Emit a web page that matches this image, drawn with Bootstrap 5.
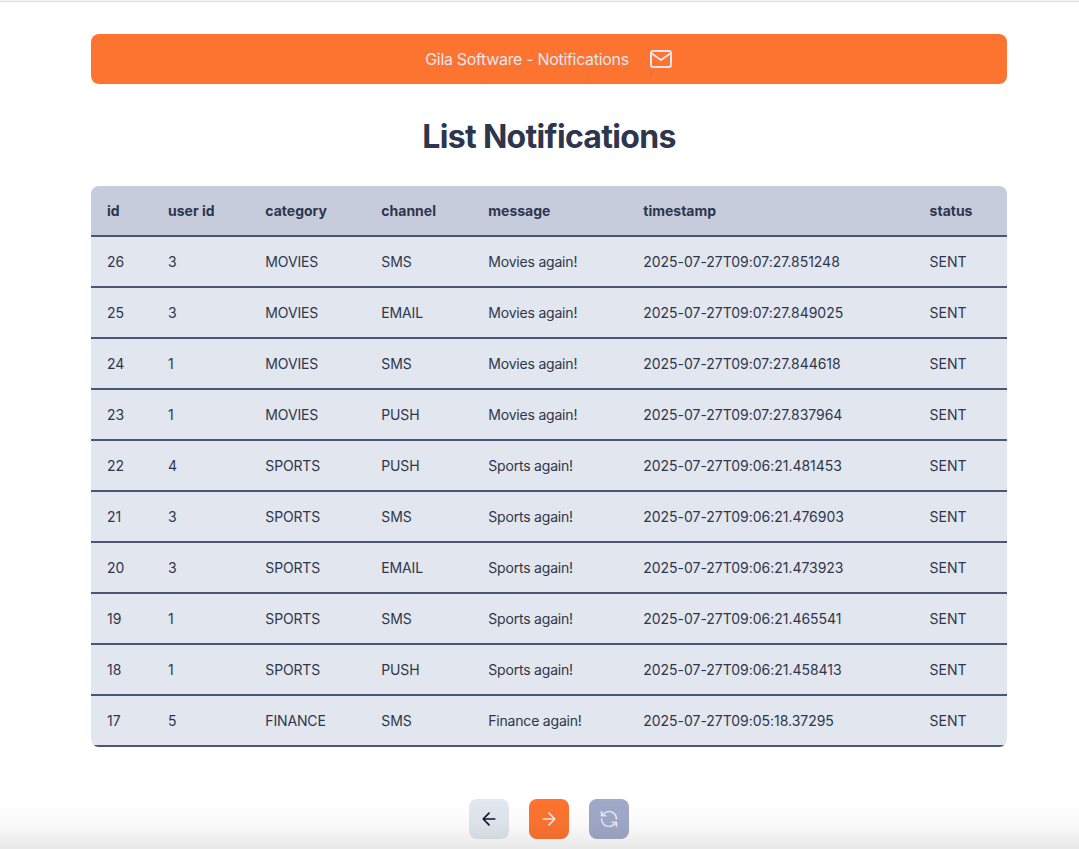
<!DOCTYPE html>
<html lang="en">
<head>
<meta charset="utf-8">
<meta name="viewport" content="width=device-width, initial-scale=1">
<title>Gila Software - Notifications</title>
<link rel="stylesheet" href="https://cdn.jsdelivr.net/npm/bootstrap@5.3.0/dist/css/bootstrap.min.css">
<style>
  body { font-family: Inter, sans-serif; color: #2e364d; background: #fff; height: 849px; overflow: hidden; border-top: 1px solid #f2f2f2; }
  .top-rule { height: 1px; background: #dcdcdc; }
  .page { width: 916px; margin-left: 91px; padding-top: 32px; }
  .banner { height: 50px; background: #fd7431; color: #e2e6ee; border-radius: 8px; gap: 20px; font-size: 16px; letter-spacing: -.32px; }
  .page-title { font-size: 32px; font-weight: 700; line-height: 40px; margin: 33px 0 29px; letter-spacing: -.68px; }
  .log-wrap { border-radius: 8px; overflow: hidden; }
  .log { table-layout: fixed; border-collapse: separate; border-spacing: 0; font-size: 14px; line-height: 17px; }
  .log > :not(caption) > * > * { padding: 16px; height: 51px; border-bottom: 2px solid #4c5575; white-space: nowrap; color: #2e364d; background-color: #e2e6ee; }
  .log > thead > tr > th { background-color: #c7ccdd; font-weight: 700; }
  .log > tbody > tr > td:nth-child(3), .log > tbody > tr > td:nth-child(4) { letter-spacing: -.15px; }
  .log > tbody > tr > td:nth-child(5) { letter-spacing: -.2px; }
  .log > tbody > tr > td:nth-child(6) { letter-spacing: -.03px; }
  .pager { gap: 20px; margin-top: 52px; }
  .pager .btn { width: 40px; height: 40px; border-radius: 8px; border: 0; }
  .pager .btn-prev { background: #e2e6ee; color: #111827; }
  .pager .btn-next { background: #fd7431; color: #e2e6ee; }
  .pager .btn-sync { background: #a0a9c8; color: #e2e6ee; }
  .fade-bottom { height: 50px; background: linear-gradient(rgba(0,0,0,0), rgba(0,0,0,.02) 50%, rgba(0,0,0,.09)); pointer-events: none; }
</style>
</head>
<body>
<div class="top-rule"></div>
<main class="page">
  <header class="banner d-flex align-items-center justify-content-center">
    <span>Gila Software - Notifications</span>
    <svg width="24" height="24" viewBox="0 0 24 24" fill="none" stroke="currentColor" stroke-width="2" stroke-linecap="round" stroke-linejoin="round"><path d="M4 4h16c1.1 0 2 .9 2 2v12c0 1.1-.9 2-2 2H4c-1.1 0-2-.9-2-2V6c0-1.1.9-2 2-2z"/><path d="M22 6l-10 7L2 6"/></svg>
  </header>
  <h1 class="page-title text-center">List Notifications</h1>
  <div class="log-wrap">
    <table class="table log mb-0">
      <colgroup><col style="width:61px"><col style="width:97.3px"><col style="width:116px"><col style="width:107px"><col style="width:155px"><col style="width:286.3px"><col style="width:93.4px"></colgroup>
      <thead><tr><th>id</th><th>user id</th><th>category</th><th>channel</th><th>message</th><th>timestamp</th><th>status</th></tr></thead>
      <tbody>
        <tr><td>26</td><td>3</td><td>MOVIES</td><td>SMS</td><td>Movies again!</td><td>2025-07-27T09:07:27.851248</td><td>SENT</td></tr>
        <tr><td>25</td><td>3</td><td>MOVIES</td><td>EMAIL</td><td>Movies again!</td><td>2025-07-27T09:07:27.849025</td><td>SENT</td></tr>
        <tr><td>24</td><td>1</td><td>MOVIES</td><td>SMS</td><td>Movies again!</td><td>2025-07-27T09:07:27.844618</td><td>SENT</td></tr>
        <tr><td>23</td><td>1</td><td>MOVIES</td><td>PUSH</td><td>Movies again!</td><td>2025-07-27T09:07:27.837964</td><td>SENT</td></tr>
        <tr><td>22</td><td>4</td><td>SPORTS</td><td>PUSH</td><td>Sports again!</td><td>2025-07-27T09:06:21.481453</td><td>SENT</td></tr>
        <tr><td>21</td><td>3</td><td>SPORTS</td><td>SMS</td><td>Sports again!</td><td>2025-07-27T09:06:21.476903</td><td>SENT</td></tr>
        <tr><td>20</td><td>3</td><td>SPORTS</td><td>EMAIL</td><td>Sports again!</td><td>2025-07-27T09:06:21.473923</td><td>SENT</td></tr>
        <tr><td>19</td><td>1</td><td>SPORTS</td><td>SMS</td><td>Sports again!</td><td>2025-07-27T09:06:21.465541</td><td>SENT</td></tr>
        <tr><td>18</td><td>1</td><td>SPORTS</td><td>PUSH</td><td>Sports again!</td><td>2025-07-27T09:06:21.458413</td><td>SENT</td></tr>
        <tr><td>17</td><td>5</td><td>FINANCE</td><td>SMS</td><td>Finance again!</td><td>2025-07-27T09:05:18.37295</td><td>SENT</td></tr>
      </tbody>
    </table>
  </div>
  <nav class="pager d-flex justify-content-center" aria-label="Pages">
    <button class="btn btn-prev p-0 d-flex align-items-center justify-content-center" aria-label="Previous"><svg width="20" height="20" viewBox="0 0 24 24" fill="none" stroke="currentColor" stroke-width="2" stroke-linecap="round" stroke-linejoin="round"><path d="m12 19-7-7 7-7M19 12H5"/></svg></button>
    <button class="btn btn-next p-0 d-flex align-items-center justify-content-center" aria-label="Next"><svg width="20" height="20" viewBox="0 0 24 24" fill="none" stroke="currentColor" stroke-width="2" stroke-linecap="round" stroke-linejoin="round"><path d="M5 12h14M12 5l7 7-7 7"/></svg></button>
    <button class="btn btn-sync p-0 d-flex align-items-center justify-content-center" aria-label="Refresh"><svg width="20" height="20" viewBox="0 0 24 24" fill="none" stroke="currentColor" stroke-width="2" stroke-linecap="round" stroke-linejoin="round"><path d="M21 12a9 9 0 0 0-9-9 9.75 9.75 0 0 0-6.74 2.74L3 8M3 3v5h5M3 12a9 9 0 0 0 9 9 9.75 9.75 0 0 0 6.74-2.74L21 16M16 16h5v5"/></svg></button>
  </nav>
</main>
<div class="fade-bottom fixed-bottom"></div>
<script src="https://cdn.jsdelivr.net/npm/bootstrap@5.3.0/dist/js/bootstrap.bundle.min.js"></script>
</body>
</html>
